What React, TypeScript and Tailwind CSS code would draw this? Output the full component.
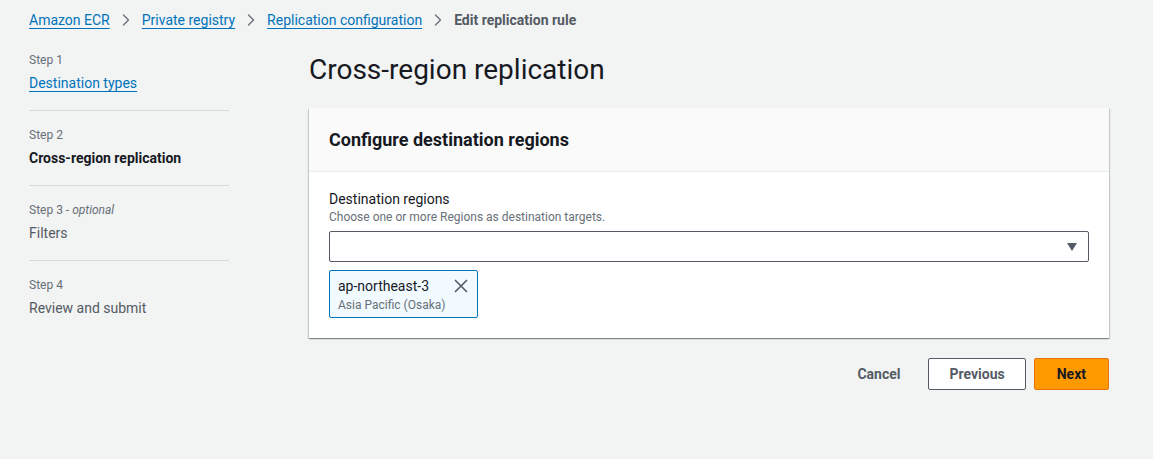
import { ChevronRight } from "lucide-react";

const crumbs = ["Amazon ECR", "Private registry", "Replication configuration"];

const steps = [
  { label: "Step 1", title: "Destination types", state: "link" },
  { label: "Step 2", title: "Cross-region replication", state: "current" },
  { label: "Step 3", optional: true, title: "Filters", state: "off" },
  { label: "Step 4", title: "Review and submit", state: "off" },
];

const App = () => {
  return (
    <div
      className="min-h-[459px] w-full bg-[#f2f3f3] text-[#16191f]"
      style={{ fontFamily: "Roboto, 'Noto Sans', sans-serif" }}
    >
      {/* breadcrumbs */}
      <nav className="flex items-center px-[29px] pt-[9px] h-[31px] text-[14px]">
        {crumbs.map((c) => (
          <span key={c} className="flex items-center">
            <a className="text-[#0073bb] underline underline-offset-[3px] decoration-1">{c}</a>
            <ChevronRight className="mx-[6px] w-[20px] h-[20px] text-[#687078]" strokeWidth={1.6} />
          </span>
        ))}
        <span className="font-bold text-[#545b64]">Edit replication rule</span>
      </nav>

      <div className="flex pl-[29px] pt-[21px]">
        {/* wizard steps */}
        <ul className="w-[200px] shrink-0">
          {steps.map((s, i) => (
            <li
              key={s.label}
              className={
                "flex flex-col gap-[4px] " +
                (i === 0 ? "pb-[16px] " : "py-[16px] ") +
                (i < steps.length - 1 ? "border-b border-[#d5dbdb]" : "")
              }
            >
              <span className="text-[12px] leading-[16px] text-[#687078]">
                {s.label}
                {s.optional && <> - <i>optional</i></>}
              </span>
              {s.state === "link" && (
                <a className="text-[14px] leading-[22px] text-[#0073bb] underline underline-offset-[3px] self-start">
                  {s.title}
                </a>
              )}
              {s.state === "current" && (
                <span className="text-[14px] leading-[22px] font-bold">{s.title}</span>
              )}
              {s.state === "off" && (
                <span className="text-[14px] leading-[22px] text-[#545b64]">{s.title}</span>
              )}
            </li>
          ))}
        </ul>

        {/* main */}
        <div className="ml-[80px] w-[800px]">
          <h1 className="text-[28px] leading-[36px] font-normal">Cross-region replication</h1>

          <div className="mt-[20px] bg-white shadow-[0_1px_1px_0_rgba(0,28,36,0.3),1px_1px_1px_0_rgba(0,28,36,0.15),-1px_1px_1px_0_rgba(0,28,36,0.15)]">
            <div className="h-[64px] flex items-center px-[20px] bg-[#fafafa] border-b border-[#eaeded]">
              <h2 className="text-[18px] font-bold">Configure destination regions</h2>
            </div>
            <div className="px-[20px] pt-[17px] pb-[20px]">
              <div className="text-[14px] leading-[20px]">Destination regions</div>
              <div className="text-[12px] leading-[16px] text-[#687078]">
                Choose one or more Regions as destination targets.
              </div>
              <div className="mt-[6px] h-[31px] border border-[#545b64] rounded-[2px] flex items-center justify-end pr-[10px]">
                <svg width="12" height="10" viewBox="0 0 12 10">
                  <path d="M1 1h10L6 9z" fill="#545b64" />
                </svg>
              </div>
              <div className="mt-[8px] inline-flex items-start gap-[8px] bg-[#f1faff] border border-[#0073bb] rounded-[2px] pl-[8px] pr-[8px] pt-[4px] pb-[4px]">
                <div className="flex flex-col">
                  <span className="text-[14px] leading-[22px]">ap-northeast-3</span>
                  <span className="text-[12px] leading-[16px] text-[#687078]">Asia Pacific (Osaka)</span>
                </div>
                <svg className="mt-[3px]" width="16" height="16" viewBox="0 0 16 16">
                  <path d="M2 2l12 12M14 2L2 14" stroke="#545b64" strokeWidth="1.6" fill="none" />
                </svg>
              </div>
            </div>
          </div>

          <div className="flex justify-end items-center mt-[20px] gap-[8px] text-[14px] font-bold">
            <button className="px-[20px] h-[32px] text-[#545b64]">Cancel</button>
            <button className="px-[20px] h-[32px] bg-white border border-[#545b64] rounded-[2px] text-[#545b64]">
              Previous
            </button>
            <button className="px-[22px] h-[32px] bg-[#ff9900] border border-[#ec7211] rounded-[2px] text-[#16191f]">
              Next
            </button>
          </div>
        </div>
      </div>
    </div>
  );
};

export default App;
